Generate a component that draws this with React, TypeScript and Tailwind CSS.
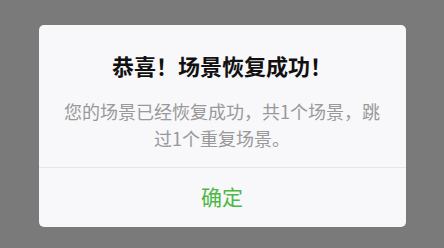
export default function App() {
  return (
    <div
      className="w-full h-[248px] bg-[#7a7a7a] pt-[25px]"
      style={{ fontFamily: '"Noto Sans CJK SC", "Noto Sans", sans-serif' }}
    >
      <div className="mx-auto w-[367px] h-[202px] rounded-[5px] bg-[#f8f7fa] flex flex-col">
        <div className="px-5 pt-[25px] pb-[15px] flex flex-col items-center">
          <div className="text-[22px] leading-[30px] font-bold text-[#111111] text-center">
            恭喜！场景恢复成功！
          </div>
          <div className="mt-[18px] text-[18px] leading-[27px] text-[#999999] text-center">
            您的场景已经恢复成功，共1个场景，跳过1个重复场景。
          </div>
        </div>
        <div className="h-px bg-[#e6e5e8]" />
        <div className="flex-1 flex items-center justify-center pb-[4px]">
          <span className="text-[21px] leading-[30px] text-[#4cb944]">确定</span>
        </div>
      </div>
    </div>
  );
}
